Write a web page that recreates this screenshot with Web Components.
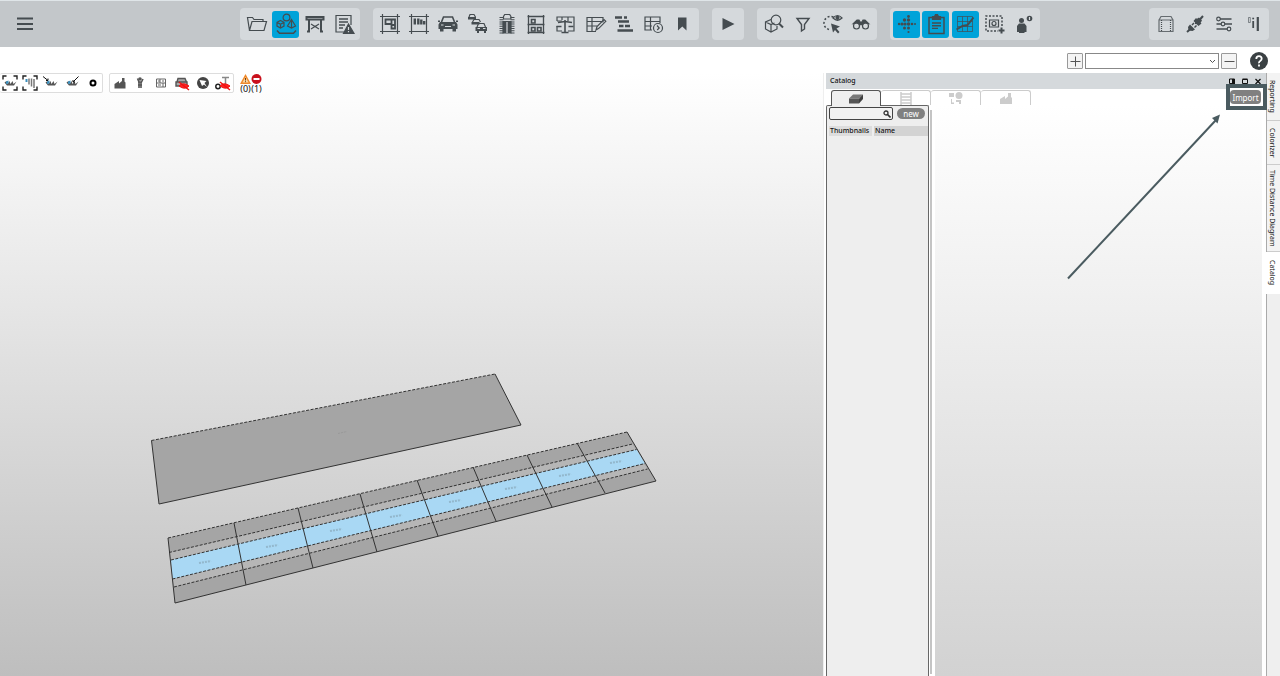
<!DOCTYPE html>
<html lang="en">
<head>
<meta charset="utf-8">
<title>Catalog</title>
<style>
  html, body { margin: 0; height: 100%; }
  body { font-family: "Noto Sans", "Open Sans", sans-serif; font-size: 8px; color: #111; background: #fff; overflow: hidden; }
</style>
</head>
<body>
<app-shell>
  <tool-bar slot="bar"></tool-bar>
  <view-bar slot="bar"></view-bar>
  <scene-view slot="main"></scene-view>
  <catalog-panel slot="main"></catalog-panel>
  <side-tabs slot="main"></side-tabs>
</app-shell>

<script>
const D = '#454c50';
/* Large toolbar icons, drawn on a 24 x 24 grid */
const ICONS = {
  menu: `<path d="M4 6.500h16M4 12h16M4 17h16" stroke-width="2.200"/>`,
  folder: `<path d="M4.500 18.500L2.500 5.500h5l1.500 2h9v2M4.500 18.500L7 9.500h14.500l-2.500 9z"/>`,
  shapes: `<circle cx="12.500" cy="5.500" r="3.400"/><path d="M6.500 8.500l3.500 1.800v3.800l-3.500 2-3.500-2v-3.800zM3 10.300l3.500 1.900 3.500-1.900M6.500 12.200v3.900M17.500 7.500l4 6.500-4 2-4-2zM17.500 7.500V16"/><path d="M3 18.500l2.500 2.800h14l2.500-2.800" stroke-width="1.500"/>`,
  desk: `<path d="M3.500 5h17v2.500h-17zM6 7.500v12M18 7.500v12M4 19.500h3M17 19.500h3" stroke-width="2"/><path d="M8 12l4 2.500 4-2.500M8 17l4-2.500 4 2.500"/>`,
  report: `<path d="M13 20H4V3.500h15V13"/><path d="M7 7h9M7 10h9M7 13h6M7 16h4" stroke-width="1.500"/><path d="M16.500 12l5.500 9.500H11.500z" fill="${D}"/><path d="M16.500 15v3M16.500 19v1.200" stroke="#d5d9dc"/>`,
  plan: `<path d="M4.500 2v20M19.500 2v20M2 4.500h20M2 19.500h20"/><path d="M7.500 7.500h6v4.500h-6zM13.500 7.500H17v9h-3.500zM13.500 13h4" stroke-width="1.800"/>`,
  planbars: `<path d="M4.500 2v20M19.500 2v20M2 4.500h20M2 19.500h20"/><path d="M7.800 6.500v6M11.300 6.500v6M14.300 7.500v5M17.200 9v3.500" stroke-width="2.400"/>`,
  car: `<path d="M5.500 10l2-5h9l2 5" stroke-width="1.600"/><path d="M4 10h16l1.500 2.500V17h-19v-4.500zM4 17h3.500v2.500H4zM16.500 17H20v2.500h-3.500zM2 8.500h2V10H2zM20 8.500h2V10h-2z" fill="${D}" stroke="none"/><path d="M5 13h2.500M16.500 13H19M9 14.500h6" stroke="#d5d9dc"/>`,
  cars: `<path d="M4 5l1-2.500h4L10.500 5M7.500 10L9 7.500h5l1.500 2.500M12 15l1.500-3.500h5.500l1.500 3.500" /><path d="M3 5h8v2.500H3zM6.500 10h8v2.500h-8zM10.500 15h11.500v4H10.500zM12 19h2v2h-2zM19 19h2v2h-2z" fill="${D}" stroke="none"/><path d="M12.500 16.500H15M18 16.500h2.500" stroke="#d5d9dc"/>`,
  road: `<path d="M8.500 7V4.500l1.200-2h5l1.200 2V7z"/><path d="M8 9.500h8V21H8z" fill="${D}"/><path d="M12 10v11" stroke="#d5d9dc"/><path d="M6.500 5v17M17.500 5v17" stroke-width="4" stroke-dasharray="1 1.200"/>`,
  rack: `<path d="M4.500 3v19M19.500 3v19M3.500 4.500h17M3.500 12.500h17M3.500 20.500h17" stroke-width="1.300"/><path d="M7.500 7.500h3.500v3.500H7.500zM7.500 15.500h3.500v3.500H7.500zM13.500 15.500H17v3.500h-3.500z" stroke-width="1.600"/>`,
  balance: `<path d="M4 9V5h17v14h-6M4 9h5M15 5v4M9 5v3M4 14v5h5"/><path d="M12 8v12M8.500 20.500h7M5 10.500l7-1 7 1M3.500 14.500h5M15.500 14.500h5" stroke-width="1.600"/>`,
  sheetpen: `<path d="M13 19.500H4v-14h16v5M4 9.500h15M9 5.500v14M4 14h10"/><path d="M13 18l1-3.500 7-7 1.800 1.800-7 7z"/>`,
  gantt: `<path d="M3 5.500h7M12 5.500h3M6 9.500h11M7 14h4.500M13 14h5M5.500 18.500H21" stroke-width="2.600"/>`,
  sheetclock: `<path d="M11 18H4V5h15v6M4 9.500h15M9.500 5v13M4 14h7"/><circle cx="17" cy="16" r="4.500"/><path d="M16 13.500l2.200 2.500-2 2"/>`,
  bookmark: `<path d="M8 5.500h8.500v13l-4.200-4-4.300 4z" fill="${D}" stroke="none"/>`,
  play: `<path d="M6.500 6l12 6-12 6z" fill="${D}" stroke="none"/>`,
  boxsearch: `<path d="M9 7.500l-5.500 2.500v7l5.500 3 6-3v-3M3.500 10l5.500 2.500 3.500-1.500M9 12.500V20"/><circle cx="14" cy="8" r="4.800"/><path d="M17 11.500l4 4" stroke-width="2"/>`,
  filter: `<path d="M6 6.500h12l-4.500 6v4.500l-3 2v-6.500z" stroke-width="1.400"/>`,
  lasso: `<path d="M13.500 5C8 3 3.500 7 4 12c.5 3.500 3.500 5.500 7 6" stroke-dasharray="2 2" stroke-width="1.500"/><path d="M11 11.500l9 3-3.500 2 3 3.500-1.500 1.500-3-3.500-2 2.500z" fill="${D}" stroke="none"/><path d="M13 6q4.500-5 9 0-4.500 4.500-9 0z"/><circle cx="17.500" cy="5.800" r="1.500" fill="${D}"/>`,
  binocular: `<circle cx="7.500" cy="14" r="3"/><circle cx="16.500" cy="14" r="3"/><path d="M4.500 11.500l3.500-3.500h2l1 2h2l1-2h2l3.500 3.500-3.500-.8-3 2h-2l-3-2z" fill="${D}"/>`,
  dots: `<g fill="${D}" stroke="none"><circle cx="4" cy="12" r="1.200"/><circle cx="7" cy="12" r="1.600"/><circle cx="10" cy="12" r="1.600"/><circle cx="13.500" cy="12" r="1.700"/><circle cx="17" cy="12" r="1.300"/><circle cx="20" cy="12" r="1"/><circle cx="9.500" cy="8" r="1.700"/><circle cx="13.500" cy="8" r="1.700"/><circle cx="13.500" cy="4.500" r="1.400"/><circle cx="9.500" cy="16" r="1.500"/><circle cx="13.500" cy="16" r="1.500"/><circle cx="13.500" cy="20" r="1.100"/></g>`,
  clipboard: `<path d="M5 5.500h15v16H5z" stroke-width="1.500"/><path d="M8.500 7.500v-3h2l1-2h2l1 2h2v3z" fill="${D}"/><path d="M8 11h9M8 13.700h9M8 16.400h6" stroke-width="1.400"/>`,
  chart: `<path d="M4.500 4.500h15v15h-15zM9.500 4.500v15M14.500 4.500v15M4.500 9.500h15M4.500 14.500h15" stroke-width=".7"/><path d="M3.500 17.500l6-3.500 5-1 6-7.500" stroke-width="2"/>`,
  capture: `<path d="M20 14V4H4v15h12" stroke-dasharray="2 1.500" stroke-width="1.500"/><path d="M7.500 8h9v7h-9z"/><circle cx="12" cy="11.500" r="2"/><path d="M19.500 15.500v6M16.500 18.500h6" stroke-width="2"/>`,
  person: `<circle cx="9.500" cy="8.500" r="2.500" fill="${D}" stroke="none"/><path d="M5 20v-6l2-2.500h5.500l2 2.500v6h-2v1H7v-1z" fill="${D}" stroke="none"/><circle cx="17.500" cy="6.500" r="2.800" fill="${D}" stroke="none"/><path d="M17.500 5v3" stroke="#d5d9dc"/>`,
  storage: `<path d="M5 8h14v11.500H5zM5 8l2-3.500h10l2 3.500" stroke="#666c70"/><path d="M7.500 8v11M16.500 8v11" stroke-dasharray="1 1"/>`,
  plug: `<path d="M4 20l4-3.500M16.500 8L20 4" stroke-width="2"/><path d="M7 12.500l5 5-2.500 1.500-4-.5-.5-3.500zM12 8l4-2.500 3 3-2.500 4-4.500-.5zM13 6l5.500 5.500-3 2.500-5-5z" fill="${D}" stroke="none"/><path d="M9 13l2-2M11.500 15.500l2-2" stroke-width="1.500"/>`,
  sliders: `<path d="M8 7h11.500M4.500 12H9M13 12h7M4.500 17H15" stroke-width="1.500"/><circle cx="6.500" cy="7" r="1.800"/><circle cx="11" cy="12" r="1.800"/><circle cx="17" cy="17" r="1.800"/>`,
  bars: `<path d="M7.500 5.500h1.800v5H7.500z" stroke-width=".6"/><path d="M12.200 9v7" stroke-width="1.800"/><path d="M11.300 6.500h1.800" stroke-width="1.600"/><path d="M16.800 5v14" stroke-width="2.200"/>`
};
/* Compact viewer icons, drawn on an 18 x 18 grid */
const frame = `<path d="M2 5.500V2h3.500M12.500 2H16v3.500M16 12.500V16h-3.500M5.500 16H2v-3.500" stroke="#222" stroke-width="1.400"/>`;
const slab = `<path d="M3.500 8.500l2-1.500 1 3 2-3 1 3 2-3 1 3 3-2.500-2.500 4H6z" fill="#555" stroke="none"/><path d="M5 7.500l2.500-1v3L5 10z" fill="#3b8fbd" stroke="none"/>`;
const eyeoff = `<path d="M6 12q4-4.500 10 0-4 4.500-10 0z" fill="#f22" stroke="#e11"/><path d="M6 8l10 8" stroke="#e11" stroke-width="1.500"/>`;
const SMALL = {
  fitall: frame + slab,
  fitfront: frame + `<path d="M8 4.500v6M10.500 4.500v8M13 5v9" stroke="#777" stroke-width="1.500"/><path d="M5.500 5v3" stroke="#3b8fbd" stroke-width="2"/>`,
  fromleft: slab + `<path d="M1 2.500l5 4M6 6.500H4M6 6.500V4.500" stroke="#111"/>`,
  fromright: slab + `<path d="M15.500 2.500L10 8M10 8V6M10 8h2" stroke="#111"/>`,
  dot: `<circle cx="9" cy="9" r="2.500" stroke="#000" stroke-width="2"/>`,
  factory: `<path d="M3.500 14.500V10L8 7v2.500L11 7V4h2.500v3.500l1 1v6z" fill="#555" stroke="none"/>`,
  worker: `<circle cx="9" cy="5" r="1.800" fill="#555" stroke="none"/><path d="M6.500 4.500L8 8v6M12 5l-2 4v5M7 8h4M7 11h4" stroke-width="1.600" stroke="#555"/>`,
  wall: `<path d="M4.500 5h9v8h-9zM4.500 9h9M8 5v4M11 9v4M6 7h2M10 7h2M6 11h3" stroke="#666"/>`,
  hidecar: `<path d="M4 8l1-3.500h7L13.500 8M3 8h11v4H3z" fill="#aaa" stroke="#555" stroke-width="1.400"/>` + eyeoff,
  globe: `<circle cx="9" cy="9" r="6" fill="#444" stroke="none"/><path d="M5.500 6l7 1-2 2 2.500 4-3-2.500-2 1.500z" fill="#fff" stroke="none"/>`,
  hidetext: `<path d="M8 3.500h7M11.500 3.500V11" stroke="#888" stroke-width="1.500"/><circle cx="4" cy="12.500" r="2.200" stroke="#222" stroke-width="1.500"/>` + eyeoff
};
const big = n => `<svg width="24" height="24" viewBox="0 0 24 24" fill="none" stroke="${D}" stroke-width="1.200" aria-hidden="true">${ICONS[n]}</svg>`;
const small = n => `<svg width="18" height="18" viewBox="0 0 18 18" fill="none" stroke="#444" aria-hidden="true">${SMALL[n]}</svg>`;

const RESET = `:host,*{box-sizing:border-box}button,input,select{font:inherit;color:inherit;margin:0;padding:0;border:0;background:none}svg{display:block}`;

class Base extends HTMLElement {
  constructor() {
    super();
    this.attachShadow({ mode: 'open' });
  }
  connectedCallback() {
    const t = document.createElement('template');
    t.innerHTML = `<style>${RESET}${this.css()}</style>${this.html()}`;
    this.shadowRoot.replaceChildren(t.content.cloneNode(true));
  }
}

customElements.define('app-shell', class extends Base {
  css() { return `
    :host{display:flex;flex-direction:column;min-height:100vh}
    main{flex:1;display:grid;grid-template-columns:minmax(0,1fr) 440px 14px}`; }
  html() { return `<slot name="bar"></slot><main><slot name="main"></slot></main>`; }
});

customElements.define('tool-button', class extends Base {
  css() { return `
    :host{display:block}
    button{display:grid;place-items:center;width:27px;height:27px;border-radius:3px}
    :host([active]) button{background:#00a3d9}
    :host([compact]) button{width:19px;height:18px}`; }
  html() {
    const n = this.getAttribute('icon');
    return `<button type="button" aria-label="${n}">${this.hasAttribute('compact') ? small(n) : big(n)}</button>`;
  }
});

customElements.define('tool-group', class extends Base {
  css() { return `
    :host{display:flex;align-items:center;justify-content:space-between;gap:2px;height:32px;padding:0 3px;border-radius:4px;background:#d5d9dc}
    :host([size="l"]){width:326px}
    :host([size="m"]){width:150px}
    :host([size="xs"]){width:32px;justify-content:center}
    :host([compact]){height:20px;padding:0;gap:0;background:#fff;border:1px solid #ddd;border-radius:2px}
    :host([compact][size="m"]){width:103px;border-left:0}
    :host([compact][size="l"]){width:125px}`; }
  html() { return `<slot></slot>`; }
});

const btns = (names, active = []) => names.map(n => `<tool-button icon="${n}"${active.includes(n) ? ' active' : ''}></tool-button>`).join('');
const compact = names => names.map(n => `<tool-button compact icon="${n}"></tool-button>`).join('');

customElements.define('tool-bar', class extends Base {
  css() { return `
    :host{display:grid;grid-template-columns:1fr auto 1fr;align-items:center;height:47px;padding:0 11px;background:#c3c7ca;border-top:1px solid #dfe5e8}
    nav{display:flex;gap:13px}
    .end{justify-content:flex-end}`; }
  html() { return `
    <tool-button icon="menu"></tool-button>
    <nav aria-label="Tools">
      <tool-group>${btns(['folder','shapes','desk','report'], ['shapes'])}</tool-group>
      <tool-group size="l">${btns(['plan','planbars','car','cars','road','rack','balance','sheetpen','gantt','sheetclock','bookmark'])}</tool-group>
      <tool-group size="xs">${btns(['play'])}</tool-group>
      <tool-group>${btns(['boxsearch','filter','lasso','binocular'])}</tool-group>
      <tool-group size="m">${btns(['dots','clipboard','chart','capture','person'], ['dots','clipboard','chart'])}</tool-group>
    </nav>
    <nav class="end" aria-label="Settings"><tool-group>${btns(['storage','plug','sliders','bars'])}</tool-group></nav>`; }
});

customElements.define('view-bar', class extends Base {
  css() { return `
    :host{display:flex;align-items:center;justify-content:flex-end;gap:2px;height:26px;padding:1px 12px 0 0;background:#fff}
    .sq{display:grid;place-items:center;width:16px;height:16px;border:1px solid #999;border-radius:1px;background:#f4f4f4}
    .combo{position:relative;width:134px;height:16px}
    select{appearance:none;width:100%;height:100%;border:1px solid #888;background:#fff}
    .combo svg{position:absolute;right:3px;top:6px;pointer-events:none}
    .help{margin-left:11px}`; }
  html() { return `
    <button class="sq" type="button" aria-label="Add view"><svg width="12" height="12" fill="none" stroke="#555"><path d="M1.500 6.500h10M6.500 1.500v10"/></svg></button>
    <div class="combo"><select aria-label="View"><option></option></select><svg width="7" height="5" fill="none" stroke="#555"><path d="M1 1l2.500 2.500L6 1"/></svg></div>
    <button class="sq" type="button" aria-label="Remove view"><svg width="12" height="12" stroke="#555"><path d="M1.500 6.500h10"/></svg></button>
    <button class="help" type="button" aria-label="Help"><svg width="18" height="18" fill="none"><circle cx="9" cy="9" r="9" fill="#3a4043"/><path d="M6.300 7Q6.300 4.200 9 4.200T11.700 6.800Q11.700 8 10.200 8.900T9 11.200M9 12.500v2" stroke="#fff" stroke-width="1.800"/></svg></button>`; }
});

/* Grid of stations: top and bottom end of each divider */
const CUTS = [[168,538,175,603],[234,523,246,585],[298,508,313,568],[360,494,377,552],[417,480,438,536],[473,467,496,521],[527,455,552,507],[577,443,605,493],[627,432,656,481]];
const MARKS = [[205,562],[272,546],[336,530],[396,516],[455,501],[511,488],[565,475],[616,462]];

customElements.define('scene-view', class extends Base {
  css() { return `
    :host{display:block;position:relative;margin-right:2px;border-right:1px solid #eee;background:linear-gradient(#fff,#bebebe)}
    .scene{position:absolute;inset:0}
    .bar{position:relative;display:flex;gap:6px}
    .state{display:grid;grid-template-columns:11px 11px;align-content:start;font-size:9px;line-height:10px}
    .state span{text-align:center}
    .state svg{margin-top:1px}`; }
  html() { return `
    <svg class="scene" width="823" height="603" viewBox="0 73 823 603" fill="none" stroke="#333" role="img" aria-label="Layout">
      <path d="M151.500 440.500L495 374l26 51-362 79z" fill="#a5a5a5" stroke="none"/>
      <path d="M151.500 440.500L495 374" stroke-dasharray="3 1.500"/>
      <path d="M495 374l26 51-362 79-7.500-63.500"/>
      <path d="M168 538L627 432l29 49-481 122z" fill="#a5a5a5" stroke="none"/>
      <path d="M169 552.500L632.500 444l15 25L174 587z" fill="#b6b6b6" stroke="none"/>
      <path d="M171 560L636.500 449.500l8.500 14L172.500 579z" fill="#a9d8f4" stroke="none"/>
      <path d="M168 538L627 432M169 552.500L632.500 444M171 560L636.500 449.500M172.500 579L645 463.500M174 587L647.500 469" stroke-dasharray="3 1.500"/>
      <path d="M175 603L656 481"/>
      ${CUTS.map(c => `<path d="M${c[0]} ${c[1]}L${c[2]} ${c[3]}"/>`).join('')}
      ${MARKS.map(m => `<path d="M${m[0] - 6} ${m[1] + 1}l12-2" stroke="#7e98a6" stroke-width="2" stroke-dasharray="2 1" opacity=".5"/>`).join('')}
      <path d="M338 433.500l9-2" stroke="#999" stroke-dasharray="2 1"/>
    </svg>
    <div class="bar">
      <tool-group compact size="m">${compact(['fitall','fitfront','fromleft','fromright','dot'])}</tool-group>
      <tool-group compact size="l">${compact(['factory','worker','wall','hidecar','globe','hidetext'])}</tool-group>
      <div class="state">
        <svg width="11" height="10"><path d="M5.500 0L11 10H0z" fill="#f0892a"/><path d="M5.500 3L8.500 8.500h-6z" fill="#fbd9a8"/><path d="M5.500 4v2.500M5.500 7.200v1" stroke="#704010"/></svg>
        <svg width="11" height="10"><circle cx="5.500" cy="5" r="5" fill="#c9101c"/><path d="M2.500 5h6" stroke="#fff" stroke-width="2"/></svg>
        <span>(0)</span><span>(1)</span>
      </div>
    </div>`; }
});

customElements.define('catalog-panel', class extends Base {
  css() { return `
    :host{display:flex;flex-direction:column;position:relative;background:#fff;font-size:7px}
    header{display:flex;align-items:center;justify-content:space-between;height:16px;padding:0 4px;background:#d5d9dc}
    h2{margin:0;font-size:7px;font-weight:500;line-height:16px}
    .win{display:flex;gap:5px}
    .tabs{display:flex;height:17px;padding:1px 0 0 5px;position:relative;z-index:1;margin-bottom:-1px}
    .tabs button{display:grid;place-items:center;width:50px;height:15px;border:1px solid #ccc;border-left-width:0;border-bottom:0;border-radius:3px 3px 0 0;background:#fff}
    .tabs button[aria-selected=true]{height:16px;border:1px solid #555;border-bottom:0;background:#efefef}
    .body{flex:1;display:flex}
    .list{width:103px;border:1px solid #666;border-bottom:0;border-radius:2px 2px 0 0;background:#eee;padding:1px 0 0 2px}
    .find{display:flex;align-items:center;gap:4px;margin-bottom:6px}
    .box{position:relative;width:64px;height:13px}
    input{width:100%;height:100%;border:1px solid #444;border-radius:2px;background:#f2f2f2;padding:0 12px 0 2px}
    .box svg{position:absolute;right:2px;top:3px}
    .new{width:28px;height:11px;border-radius:6px;background:#808080;color:#fff;font-size:8px;line-height:10px}
    table{width:100%;border-collapse:separate;border-spacing:0;table-layout:fixed}
    th{height:10px;padding:0 0 0 1px;font-weight:500;line-height:10px;text-align:left;background:#d3d3d3;white-space:nowrap}
    th:first-child{width:45px;background:#ddd;border-right:2px solid #eee}
    .grip{width:2px;margin:5px 3px 2px 1px;background:#c4c4c4}
    .canvas{flex:1;margin-right:4px;background:linear-gradient(#fff,#d2d2d2)}
    .hot{position:absolute;top:11px;right:-1px;z-index:2;display:flex;align-items:flex-start;width:41px;height:26px;border:4px solid #4a5b60;background:#fff;padding-top:2px}
    .hot button{width:31px;height:14px;border-radius:4px;background:#808080;color:#fff;font-size:8px;line-height:13px}
    .arrow{position:absolute;top:41px;right:44px;z-index:1}`; }
  html() { return `
    <header><h2>Catalog</h2><div class="win">
      <svg width="8" height="8"><path d="M1.500 2h5v4.500h-5z" fill="none" stroke="#111"/><path d="M4 2h3v5H4z" fill="#111"/></svg>
      <svg width="8" height="8"><path d="M1.500 2.500h5v4h-5zM1.500 2h5" fill="none" stroke="#111"/></svg>
      <svg width="8" height="8"><path d="M1.500 2l5 5M6.500 2l-5 5" stroke="#111" stroke-width="1.300"/></svg>
    </div></header>
    <div class="tabs" role="tablist">
      <button role="tab" aria-selected="true" aria-label="Parts"><svg width="16" height="12"><path d="M5 1.500h10l-4 4H1z" fill="#777"/><path d="M1 5.500h10v5H1z" fill="#555"/><path d="M11 5.500l4-4v4.500l-4 4.500z" fill="#3f3f3f"/></svg></button>
      <button role="tab" aria-selected="false" aria-label="Racks"><svg width="14" height="13" fill="none" stroke="#ccc" stroke-width="1.500"><path d="M2 0v13M12 0v13M2 2h10M2 5h10M2 8h10M2 11h10"/></svg></button>
      <button role="tab" aria-selected="false" aria-label="Resources"><svg width="16" height="14" fill="#ccc"><path d="M1 2h5v4H1zM1 8h2v5h3v-1.500H4V8zM8 9h5v4h-2v-2H8z"/><circle cx="11" cy="4.500" r="3.500"/></svg></button>
      <button role="tab" aria-selected="false" aria-label="Factory"><svg width="14" height="13" fill="#ccc"><path d="M1 12V7l5-3v3l3-2.500V1h3v4l1 1v6z"/></svg></button>
    </div>
    <div class="body">
      <div class="list">
        <div class="find">
          <div class="box"><input type="text" aria-label="Search catalog"><svg width="8" height="8" fill="none" stroke="#333"><circle cx="3" cy="3" r="2" stroke-width="1.300"/><path d="M4.500 4.500l3 3" stroke-width="1.600"/></svg></div>
          <button class="new" type="button">new</button>
        </div>
        <table><thead><tr><th scope="col">Thumbnails</th><th scope="col">Name</th></tr></thead></table>
      </div>
      <div class="grip"></div>
      <div class="canvas"></div>
    </div>
    <div class="hot"><button type="button">Import</button></div>
    <svg class="arrow" width="156" height="168"><path d="M2 164.500L150 6" stroke="#4a5b60" stroke-width="2"/><path d="M154 0.500l-2.500 9-5.500-5.500z" fill="#4a5b60"/></svg>`; }
});

customElements.define('side-tabs', class extends Base {
  css() { return `
    :host{display:flex;flex-direction:column;background:#efefef;border-left:1px solid #aaa;font-size:7px}
    button{display:grid;place-items:center;width:100%;padding-right:3px;border-bottom:1px solid #ccc;background:#f3f3f3;writing-mode:vertical-rl;line-height:10px;white-space:nowrap}
    .a{height:48px}.b{height:44px}.c{height:87px}.d{height:42px}
    button[aria-selected=true]{background:#fff;margin-left:-1px;border:0;width:calc(100% + 1px)}`; }
  html() { return `
    <button class="a" role="tab" aria-selected="false">Reporting</button>
    <button class="b" role="tab" aria-selected="false">Colorizer</button>
    <button class="c" role="tab" aria-selected="false">Time Distance Diagram</button>
    <button class="d" role="tab" aria-selected="true">Catalog</button>`; }
});
</script>
</body>
</html>
